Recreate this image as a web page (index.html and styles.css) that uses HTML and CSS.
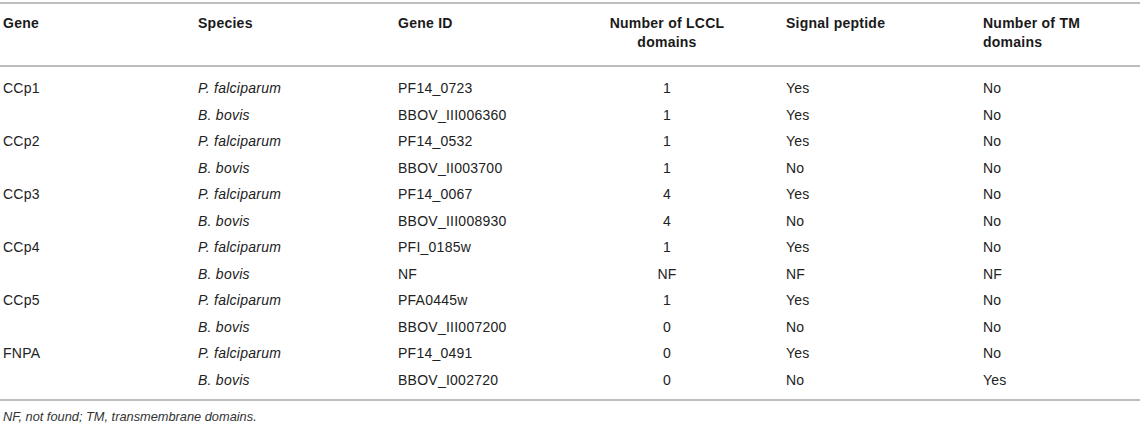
FILE: index.html
```html
<!DOCTYPE html>
<html>
<head>
<meta charset="utf-8">
<link rel="stylesheet" href="styles.css">
</head>
<body>
<div class="wrap">
<table class="data">
<colgroup>
<col class="c1"><col class="c2"><col class="c3"><col class="c4"><col class="c5"><col class="c6">
</colgroup>
<thead>
<tr>
<th>Gene</th>
<th>Species</th>
<th>Gene ID</th>
<th class="ctr">Number of LCCL<br>domains</th>
<th>Signal peptide</th>
<th>Number of TM<br>domains</th>
</tr>
</thead>
<tbody>
<tr class="first"><td>CCp1</td><td class="sp">P. falciparum</td><td>PF14_0723</td><td class="ctr">1</td><td>Yes</td><td>No</td></tr>
<tr><td></td><td class="sp">B. bovis</td><td>BBOV_III006360</td><td class="ctr">1</td><td>Yes</td><td>No</td></tr>
<tr><td>CCp2</td><td class="sp">P. falciparum</td><td>PF14_0532</td><td class="ctr">1</td><td>Yes</td><td>No</td></tr>
<tr><td></td><td class="sp">B. bovis</td><td>BBOV_II003700</td><td class="ctr">1</td><td>No</td><td>No</td></tr>
<tr><td>CCp3</td><td class="sp">P. falciparum</td><td>PF14_0067</td><td class="ctr">4</td><td>Yes</td><td>No</td></tr>
<tr><td></td><td class="sp">B. bovis</td><td>BBOV_III008930</td><td class="ctr">4</td><td>No</td><td>No</td></tr>
<tr><td>CCp4</td><td class="sp">P. falciparum</td><td>PFI_0185w</td><td class="ctr">1</td><td>Yes</td><td>No</td></tr>
<tr><td></td><td class="sp">B. bovis</td><td>NF</td><td class="ctr">NF</td><td>NF</td><td>NF</td></tr>
<tr><td>CCp5</td><td class="sp">P. falciparum</td><td>PFA0445w</td><td class="ctr">1</td><td>Yes</td><td>No</td></tr>
<tr><td></td><td class="sp">B. bovis</td><td>BBOV_III007200</td><td class="ctr">0</td><td>No</td><td>No</td></tr>
<tr><td>FNPA</td><td class="sp">P. falciparum</td><td>PF14_0491</td><td class="ctr">0</td><td>Yes</td><td>No</td></tr>
<tr class="last"><td></td><td class="sp">B. bovis</td><td>BBOV_I002720</td><td class="ctr">0</td><td>No</td><td>Yes</td></tr>
</tbody>
</table>
<p class="note">NF, not found; TM, transmembrane domains.</p>
</div>
</body>
</html>
```
FILE: styles.css
```css
html, body {
  margin: 0;
  padding: 0;
  background: #fff;
}
body {
  font-family: "Liberation Sans", Arial, sans-serif;
  font-size: 14px;
  letter-spacing: 0.25px;
  color: #222;
}
.wrap {
  width: 1140px;
  padding-top: 2px;
}
.data {
  width: 1140px;
  border-collapse: collapse;
  table-layout: fixed;
}
.c1 { width: 195px; }
.c2 { width: 200px; }
.c3 { width: 156px; }
.c4 { width: 232px; }
.c5 { width: 197px; }
.c6 { width: 160px; }
.data thead tr {
  border-top: 2px solid #bdbdbd;
  border-bottom: 2px solid #bdbdbd;
}
.data th {
  text-align: left;
  vertical-align: top;
  font-weight: bold;
  line-height: 19px;
  padding: 10px 3px 13px 3px;
  color: #1a1a1a;
}
.data td {
  line-height: 18px;
  padding: 4.25px 3px;
  vertical-align: middle;
}
.data .ctr { text-align: center; }
.data .sp { font-style: italic; }
.data tr.first td { padding-top: 12px; }
.data tr.last td { padding-bottom: 10px; }
.data tbody tr.last { border-bottom: 2px solid #bdbdbd; }
.note {
  margin: 0;
  padding: 7px 3px 0 3px;
  font-size: 12.8px;
  letter-spacing: 0;
  font-style: italic;
  line-height: 18px;
  color: #333;
}
```
